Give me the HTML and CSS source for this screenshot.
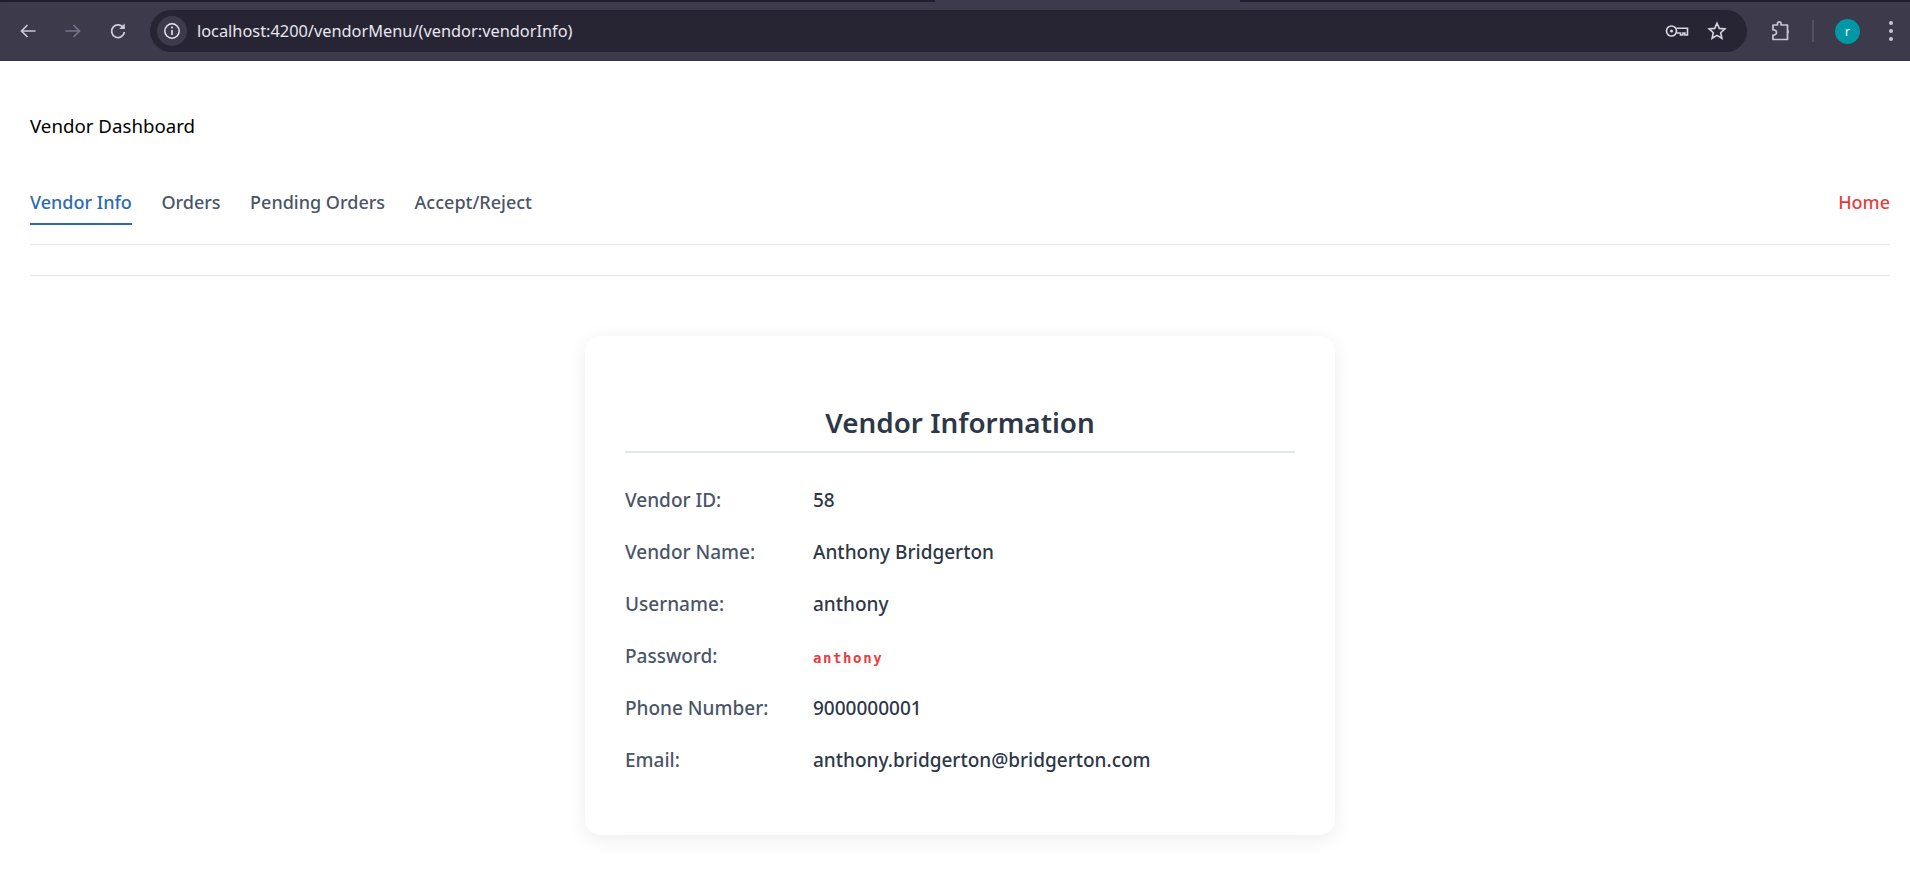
FILE: index.html
```html
<!DOCTYPE html>
<html>
<head>
    <title>Vendor Dashboard</title>
    <link rel="stylesheet" href="styles.css">
</head>
<body>
    <div class="browser-bar">
        <div class="tab-strip"><div class="current-tab"></div></div>
        <div class="toolbar">
            <div class="nav-btn">
                <svg width="18" height="18" viewBox="0 0 18 18"><path d="M16.500 9H2.500M8.500 3L2.500 9l6 6" fill="none" stroke="#c9c7d6" stroke-width="1.700"/></svg>
            </div>
            <div class="nav-btn nav-forward">
                <svg width="18" height="18" viewBox="0 0 18 18"><path d="M1.500 9h14M9.500 3l6 6-6 6" fill="none" stroke="#77748a" stroke-width="1.700"/></svg>
            </div>
            <div class="nav-btn nav-reload">
                <svg width="18" height="18" viewBox="0 0 18 18"><path d="M14.600 6A6.400 6.400 0 1 0 15.400 10" fill="none" stroke="#d0cedb" stroke-width="1.800"/><path d="M15.800 1.400v5.600h-5.600z" fill="#d0cedb"/></svg>
            </div>
            <div class="address">
                <div class="site-info">
                    <svg width="18" height="18" viewBox="0 0 18 18"><circle cx="9" cy="9" r="7.200" fill="none" stroke="#e8e6ef" stroke-width="1.500"/><path d="M9 8v5" stroke="#e8e6ef" stroke-width="1.600"/><circle cx="9" cy="5.600" r="1" fill="#e8e6ef"/></svg>
                </div>
                <span class="url">localhost:4200/vendorMenu/(vendor:vendorInfo)</span>
                <svg class="key-icon" width="24" height="14" viewBox="0 0 24 14"><circle cx="6.500" cy="7" r="5" fill="none" stroke="#d5d3dd" stroke-width="1.700"/><circle cx="6.500" cy="7" r="1.600" fill="#d5d3dd"/><path d="M11.500 4.200h11v6.800h-2.600V9h-2v2h-2.400V9h-4" fill="none" stroke="#d5d3dd" stroke-width="1.600"/></svg>
                <svg class="star-icon" width="20" height="20" viewBox="0 0 20 20"><path d="M10 2.200l2.300 5.200 5.600.5-4.200 3.800 1.200 5.600L10 14.400l-4.900 2.900 1.200-5.600L2.100 7.900l5.600-.5z" fill="none" stroke="#d5d3dd" stroke-width="1.600"/></svg>
            </div>
            <svg class="puzzle-icon" width="22" height="22" viewBox="0 0 22 22"><path d="M3 5h4.500V3.600a1.800 1.800 0 0 1 3.600 0V5h6.400v14.500H3V15h1a2.500 2.500 0 0 0 0-5H3z" fill="none" stroke="#c9c7d6" stroke-width="1.700" stroke-linejoin="round"/><path d="M18 10a2 2 0 0 1 0 3.400z" fill="#c9c7d6"/></svg>
            <div class="separator"></div>
            <div class="avatar">r</div>
            <div class="dots"><span></span><span></span><span></span></div>
        </div>
    </div>

    <div class="page">
        <h1 class="brand">Vendor Dashboard</h1>
        <nav class="tabs">
            <a class="tab tab-active">Vendor Info</a>
            <a class="tab">Orders</a>
            <a class="tab">Pending Orders</a>
            <a class="tab">Accept/Reject</a>
            <a class="tab tab-home">Home</a>
        </nav>
        <div class="empty-row"></div>

        <div class="card">
            <h2 class="card-title">Vendor Information</h2>
            <div class="info-row">
                <span class="info-label">Vendor ID:</span>
                <span class="info-value">58</span>
            </div>
            <div class="info-row">
                <span class="info-label">Vendor Name:</span>
                <span class="info-value">Anthony Bridgerton</span>
            </div>
            <div class="info-row">
                <span class="info-label">Username:</span>
                <span class="info-value">anthony</span>
            </div>
            <div class="info-row">
                <span class="info-label">Password:</span>
                <span class="info-value info-password">anthony</span>
            </div>
            <div class="info-row">
                <span class="info-label">Phone Number:</span>
                <span class="info-value">9000000001</span>
            </div>
            <div class="info-row">
                <span class="info-label">Email:</span>
                <span class="info-value">anthony.bridgerton@bridgerton.com</span>
            </div>
        </div>
    </div>
</body>
</html>
```

FILE: styles.css
```css
* {
    box-sizing: border-box;
}

html, body {
    height: 100%;
}

body {
    margin: 0;
    font-family: "Noto Sans", Arial, sans-serif;
    background-color: white;
    overflow: hidden;
}

.browser-bar {
    height: 61px;
    background-color: #3d3a4c;
}

.tab-strip {
    height: 2px;
    background-color: #211f2e;
}

.current-tab {
    width: 305px;
    height: 2px;
    margin-left: 935px;
    background-color: #3d3a4c;
}

.toolbar {
    height: 59px;
    display: flex;
    align-items: center;
    padding-left: 10px;
    background-color: #3d3a4c;
    border-top-left-radius: 10px;
    border-bottom: 1px solid #35333f;
}

.nav-btn {
    width: 36px;
    height: 36px;
    margin-right: 9px;
    display: flex;
    align-items: center;
    justify-content: center;
}

.nav-reload {
    margin-right: 14px;
}

.address {
    width: 1597px;
    height: 42px;
    display: flex;
    align-items: center;
    padding: 0 20px 0 7px;
    background-color: #272433;
    border-radius: 21px;
}

.site-info {
    width: 30px;
    height: 30px;
    display: flex;
    align-items: center;
    justify-content: center;
    background-color: #3d3a4c;
    border-radius: 50%;
}

.url {
    flex: 1;
    margin-left: 10px;
    color: #e8e6ef;
    font-size: 16.350px;
}

.key-icon {
    margin-right: 18px;
}

.puzzle-icon {
    margin-left: 23px;
}

.separator {
    width: 2px;
    height: 22px;
    margin-left: 20px;
    background-color: #55525f;
}

.avatar {
    width: 25px;
    height: 25px;
    margin-left: 21px;
    color: white;
    font-size: 13px;
    line-height: 25px;
    text-align: center;
    background-color: #0097a7;
    border-radius: 50%;
}

.dots {
    display: flex;
    flex-direction: column;
    gap: 4px;
    margin-left: 29px;
}

.dots span {
    width: 4px;
    height: 4px;
    background-color: #c9c7d6;
    border-radius: 50%;
}

.page {
    padding: 0 20px 0 30px;
}

.brand {
    margin: 0;
    padding-top: 52px;
    height: 130px;
    color: black;
    font-size: 18.700px;
    font-weight: 400;
    line-height: 26px;
}

.tabs {
    display: flex;
    gap: 29.500px;
    height: 54px;
    border-bottom: 1px solid #e2e8f0;
}

.tab {
    height: 35px;
    margin-top: -1px;
    color: #4a5568;
    font-size: 18px;
    font-weight: 500;
    line-height: 24px;
}

.tab-active {
    color: #2b6cb0;
    border-bottom: 2px solid #2b6cb0;
}

.tab-home {
    margin-left: auto;
    color: #e53e3e;
}

.empty-row {
    height: 31px;
    border-bottom: 1px solid #e2e8f0;
}

.card {
    width: 750px;
    height: 499px;
    margin: 60px auto 0;
    padding: 66px 40px 0;
    background-color: white;
    border-radius: 15px;
    box-shadow: 0 4px 20px rgba(0, 0, 0, 0.08);
}

.card-title {
    margin: 0 0 21px;
    padding-bottom: 9px;
    color: #2d3748;
    font-size: 27.800px;
    font-weight: 600;
    line-height: 40px;
    text-align: center;
    border-bottom: 2px solid #e2e8f0;
}

.info-row {
    display: flex;
    align-items: center;
    height: 52px;
    font-size: 19px;
}

.info-label {
    width: 188px;
    color: #4a5568;
    font-weight: 500;
}

.info-value {
    color: #2d3748;
    font-weight: 500;
}

.info-password {
    padding-top: 4px;
    color: #e53e3e;
    font-family: "DejaVu Sans Mono", monospace;
    font-size: 14px;
    font-weight: 700;
    letter-spacing: 1.600px;
}
```
